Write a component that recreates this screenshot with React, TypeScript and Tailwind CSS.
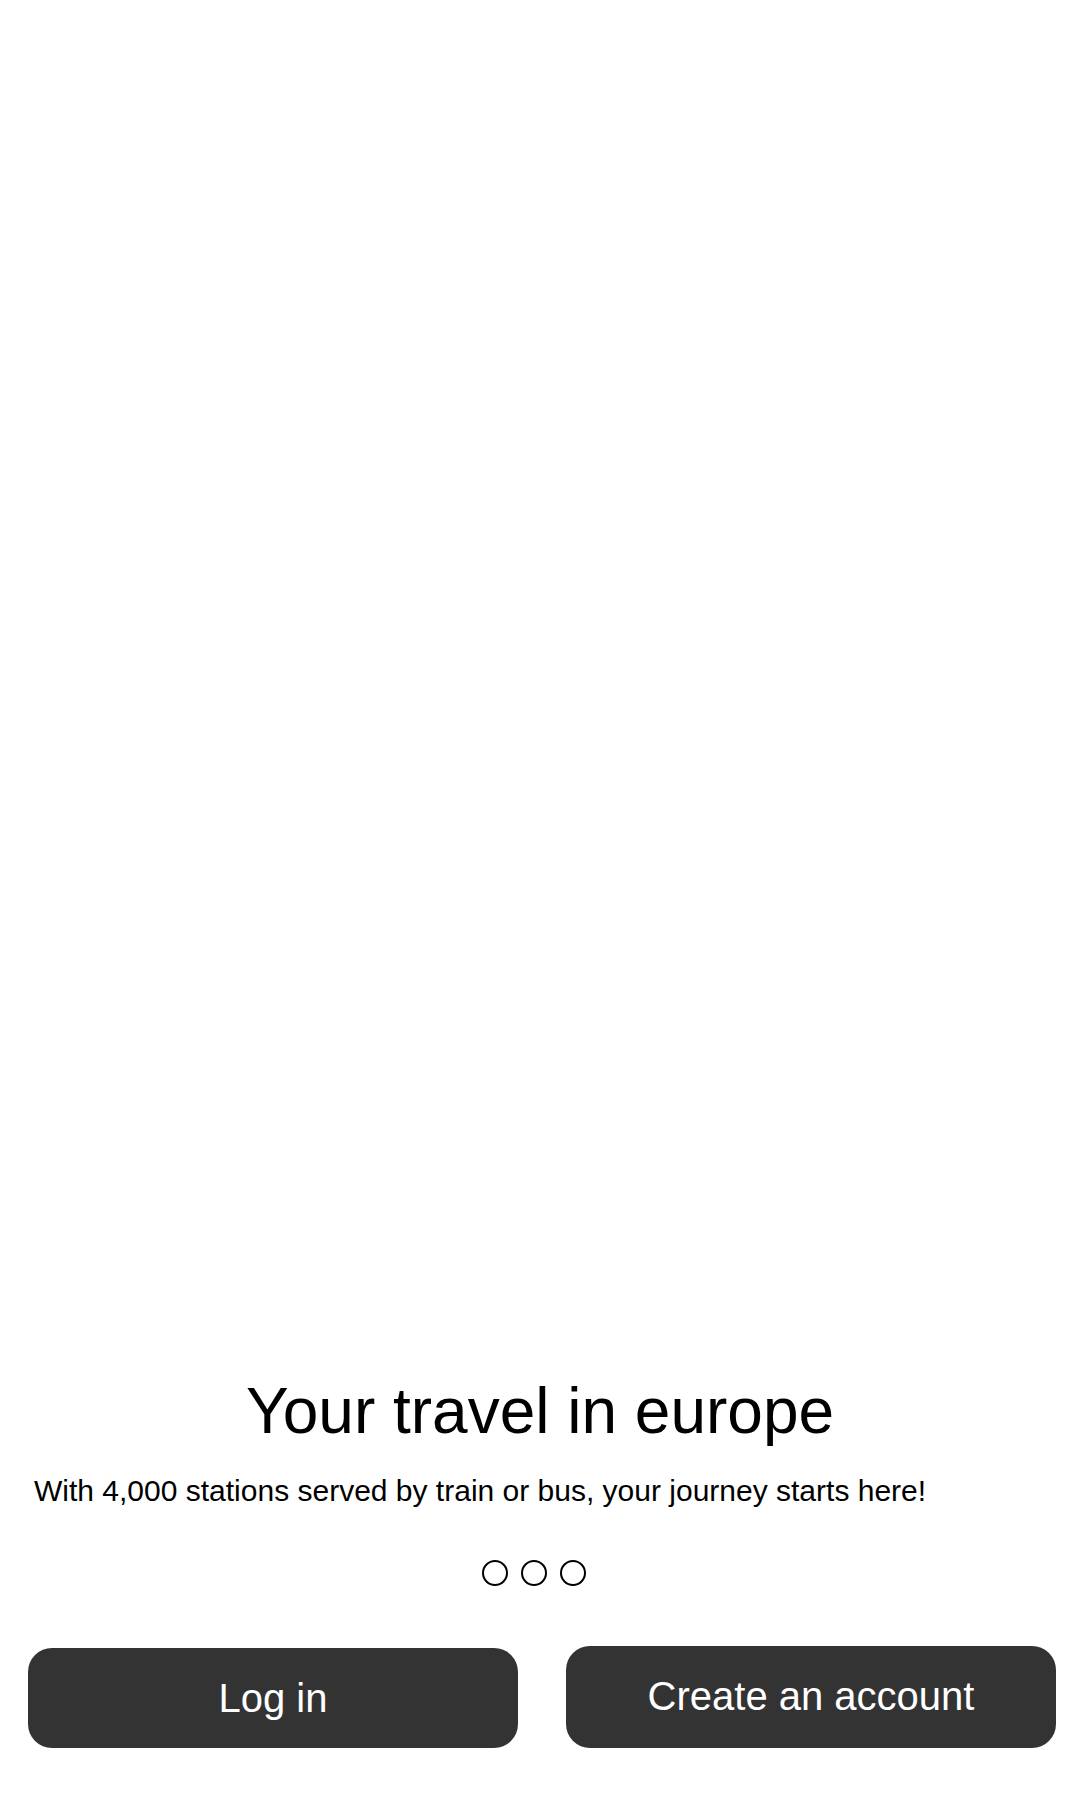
export default function App() {
  const dots = [0, 1, 2];

  return (
    <div
      className="min-h-[1800px] w-full bg-white flex flex-col justify-end pb-[52px] text-black"
      style={{ fontFamily: '"Liberation Sans", Arial, sans-serif' }}
    >
      <h1 className="text-center text-[64px] leading-[72px] font-normal">Your travel in europe</h1>
      <p className="mt-[27px] pl-[34px] text-[30px] leading-[34px]">
        With 4,000 stations served by train or bus, your journey starts here!
      </p>

      <div className="mt-[52px] flex justify-center gap-[13px] pr-[12px]">
        {dots.map((d) => (
          <span key={d} className="block w-[26px] h-[26px] rounded-full border-[2.5px] border-black" />
        ))}
      </div>

      <div className="mt-[60px] grid grid-cols-2 gap-[48px] pl-[28px] pr-[24px] items-end">
        <button className="h-[100px] rounded-[24px] bg-[#333333] text-white text-[40px] leading-none">
          Log in
        </button>
        <button className="h-[102px] rounded-[24px] bg-[#333333] text-white text-[40px] leading-none pb-[2px]">
          Create an account
        </button>
      </div>
    </div>
  );
}
